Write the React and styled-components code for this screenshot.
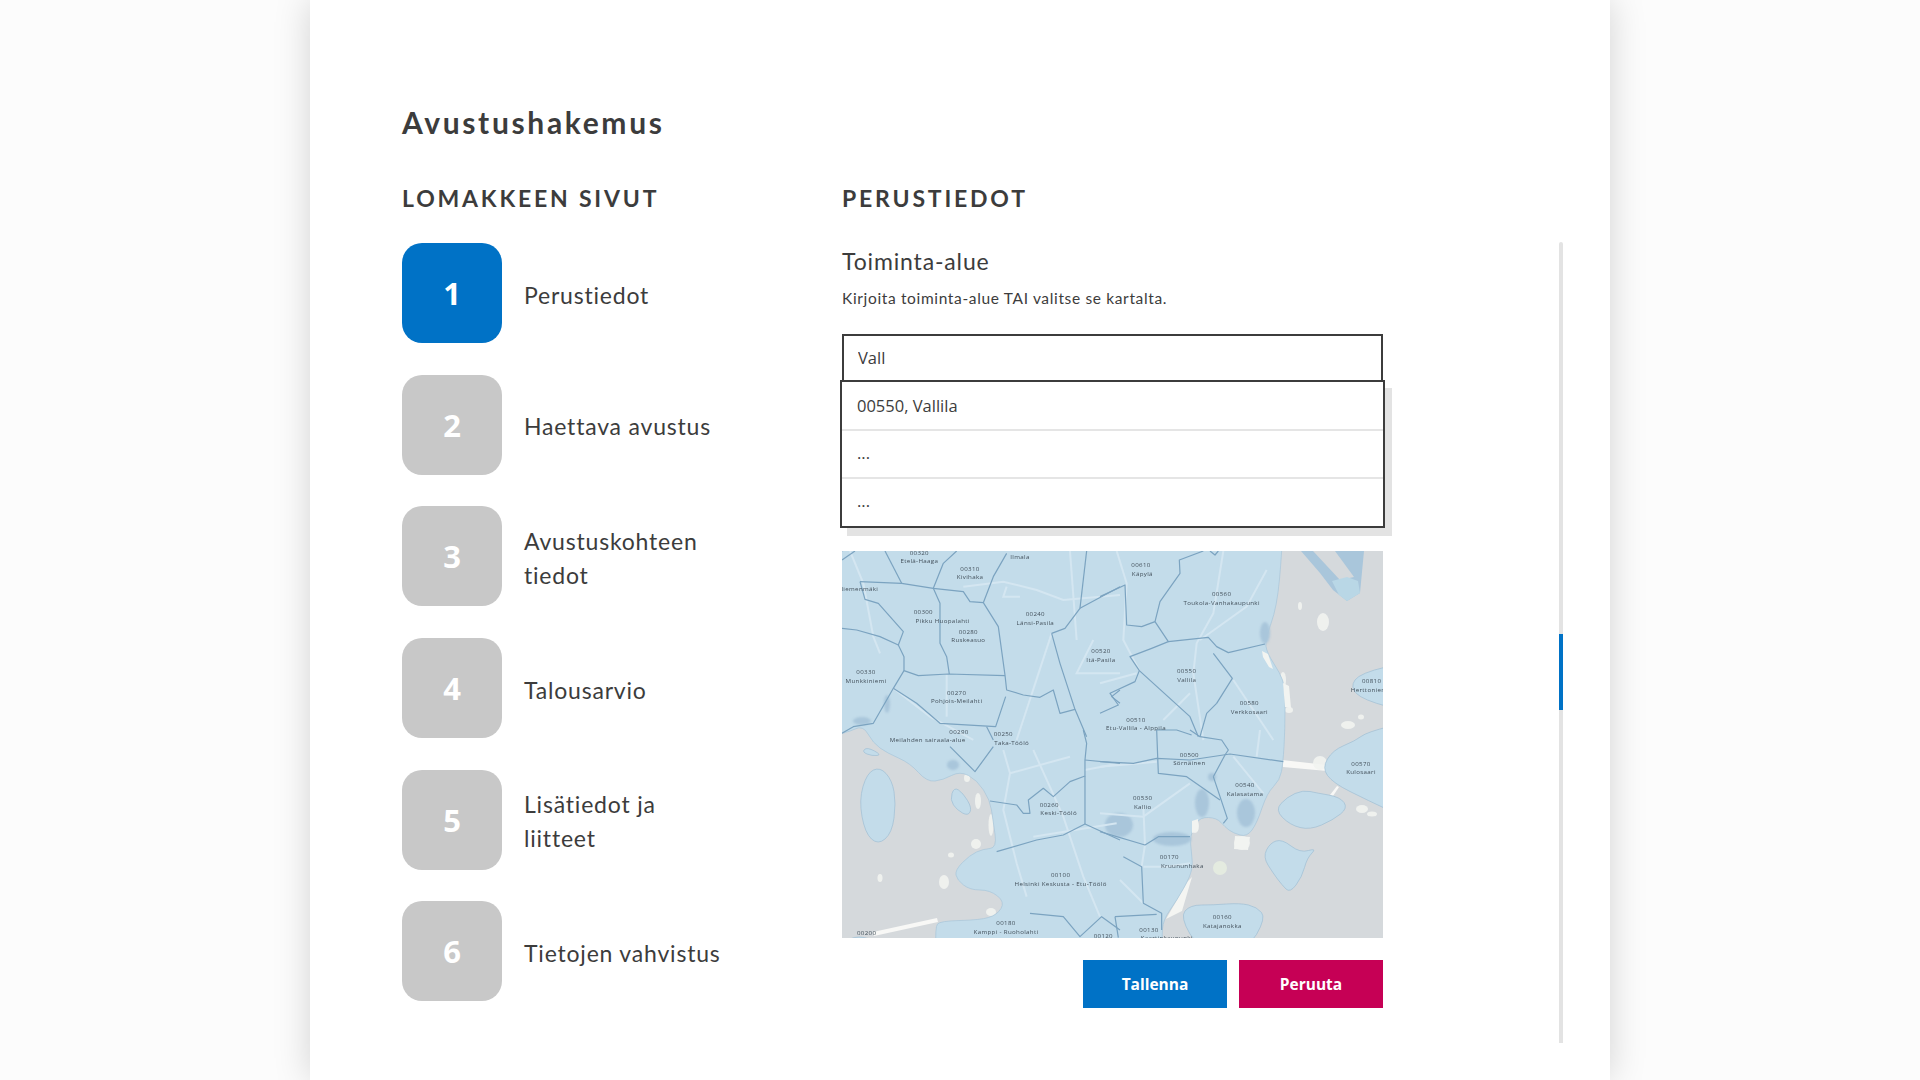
import React from "react";
import styled, { createGlobalStyle } from "styled-components";

const Global = createGlobalStyle`
  html, body { margin: 0; padding: 0; background: #fcfcfc; overflow: hidden; }
  * { box-sizing: border-box; }
`;
const Panel = styled.main`
  width: 1300px; height: 1080px; margin: 0 auto; padding: 106px 0 0 92px;
  background: #fff; box-shadow: 0 0 34px rgba(0,0,0,.17);
  color: #3c3c3c; font-family: Lato, "Noto Sans", sans-serif;
`;
const Title = styled.h1`
  margin: 0 0 46px; font-size: 30px; line-height: 32px; font-weight: 700; letter-spacing: 2.65px;
`;
const Columns = styled.div`display: flex; align-items: flex-start;`;
const Sidebar = styled.nav`width: 440px; flex: none;`;
const SectionHeading = styled.h2`
  margin: 0 0 ${p => (p.$flush ? 0 : 31)}px; font-size: 23px; line-height: 28px; font-weight: 700; letter-spacing: 2.8px; text-transform: uppercase;
`;
const Steps = styled.ol`
  list-style: none; margin: 0; padding: 0; display: flex; flex-direction: column; gap: 31.7px;
`;
const Step = styled.li`display: flex; align-items: center; gap: 22px;`;
const Tile = styled.span`
  width: 100px; height: 100px; border-radius: 20px; flex: none;
  display: flex; align-items: center; justify-content: center;
  background: ${p => (p.$active ? "#0072c6" : "#c8c8c8")}; color: #fff;
  font: 700 31px "Open Sans", sans-serif;
`;
const StepLabel = styled.span`
  width: 205px; padding-top: 3px; font-size: 23px; line-height: 34px; letter-spacing: .8px;
`;
const Main = styled.section`width: 541px; flex: none;`;
const FieldTitle = styled.h3`
  margin: 35px 0 0; font-size: 23px; line-height: 28px; font-weight: 400; letter-spacing: .85px;
`;
const Hint = styled.p`
  margin: 13px 0 26px; font-size: 15.5px; line-height: 20px; letter-spacing: .65px;
`;
const Combo = styled.div`position: relative;`;
const Input = styled.input`
  display: block; width: 100%; height: 48px; padding: 0 14px 2px; border: 2px solid #3c3c3c; border-radius: 0;
  background: #fff; color: #3c3c3c; font: 400 16.5px "Open Sans", sans-serif; outline: none;
`;
const Menu = styled.ul`
  position: absolute; top: 46px; left: -2px; right: -2px; margin: 0; padding: 0; list-style: none;
  height: 148px; background: #fff; border: 2px solid #3c3c3c; box-shadow: 7px 8px 0 #e3e3e3;
`;
const MenuItem = styled.li`
  height: 47px; padding: 0 15px 1px; display: flex; align-items: center;
  font: 400 16.5px "Open Sans", sans-serif; color: #3c3c3c;
  & + & { height: 48px; padding-bottom: 3px; border-top: 2px solid #e5e5e5; }
`;
const MapBox = styled.div`
  margin-top: 169px; width: 541px; height: 387px; overflow: hidden; background: #d5d9dc;
  svg { display: block; filter: blur(.45px); }
`;
const Actions = styled.div`display: flex; justify-content: flex-end; gap: 12px; margin-top: 22px;`;
const Button = styled.button`
  width: 144px; height: 48px; border: 0; border-radius: 0; color: #fff;
  background: ${p => (p.$danger ? "#c60055" : "#0072c6")};
  font: 700 15.5px "Open Sans", sans-serif;
`;
const Track = styled.div`
  width: 4px; height: 801px; flex: none; margin: 58px 0 0 176px; background: #e3e3e3; border-radius: 2px 2px 0 0;
`;
const Thumb = styled.div`width: 4px; height: 76px; margin-top: 392px; background: #0072c6;`;

const LAND = "#c3dcea", DARK = "#a9c6db", LINE = "#7ba3c0", ROAD = "#d4e6f1", SAND = "#f2f4f1", WATER = "#d5d9dc";

// Closed outline through the midpoints of a polygon's edges, so coasts come out round.
const smooth = pts => {
  const mid = (a, b) => [(a[0] + b[0]) / 2, (a[1] + b[1]) / 2];
  const start = mid(pts[pts.length - 1], pts[0]);
  let d = `M${start[0]} ${start[1]}`;
  pts.forEach((p, i) => {
    const m = mid(p, pts[(i + 1) % pts.length]);
    d += `Q${p[0]} ${p[1]} ${m[0]} ${m[1]}`;
  });
  return d + "Z";
};

const land = [[-40,-40],[441,-40],[440,0],[435,56],[423,89],[425,102],[438,122],[443,136],[443,179],[441,212],[438,229],[425,242],[415,272],[405,286],[391,282],[383,276],[375,267],[358,266],[350,279],[348,292],[351,312],[348,326],[335,349],[321,369],[320,387],[320,420],[95,420],[93,376],[98,370],[138,369],[155,364],[163,351],[148,339],[128,339],[115,329],[113,319],[128,304],[141,298],[155,297],[151,269],[148,249],[135,229],[118,220],[101,229],[85,231],[68,212],[45,202],[31,192],[21,174],[5,182],[-40,190]];
const islands = [
  [[570,110],[518,122],[508,136],[521,149],[570,162]],
  [[570,170],[525,181],[513,190],[491,199],[480,217],[491,232],[525,249],[570,270]],
  [[433,259],[445,246],[461,239],[475,242],[498,246],[506,257],[491,269],[468,279],[448,274]],
  [[421,306],[428,292],[440,288],[458,302],[475,297],[465,307],[460,326],[448,342],[440,334],[431,322]],
  [[338,366],[348,354],[371,354],[398,352],[415,356],[424,367],[405,400],[358,400]],
  [[17,249],[25,222],[38,216],[50,229],[54,252],[50,282],[36,294],[23,282]],
  [[20,201],[25,196],[40,204],[30,205]],
  [[108,249],[112,236],[121,242],[130,257],[126,265],[115,259]],
  [[0,392],[16,384],[40,392]],
];
const sandBlobs = [
  [481,71,6,9],[458,55,2,4],[506,174,7,4],[519,166,3,2.5],[441,129,3,8],[447,159,4,3],
  [478,212,7,7],[400,292,8,7],[353,275,4,7],[125,227,3,4],[136,250,3,8],[149,274,2.5,11],
  [134,293,5,5],[109,304,3,2.5],[38,327,2.5,4],[102,331,5,7],[149,361,5,4],[520,258,6,4],[530,263,5,2.5],
];
const darkBlobs = [
  [277,274,14,12],[360,252,7,14],[330,288,19,7],[423,82,5,11],[404,262,9,14],[20,170,9,4],[45,153,3,9],[111,214,6,5],[370,226,4,4],
];
const lines3 = [
  "M90 125L215 130L310 145L400 155L420 185L460 188L505 260L525 405L530 450L580 465L630 472L670 450L690 520L735 508",
  "M90 125L105 178L145 190L220 275L205 315L222 350L222 392L265 407L355 402L525 407",
  "M310 145L330 190L330 310L350 350L358 402",
  "M222 392L190 445L170 480L130 550L70 560L36 580",
  "M190 445L260 490L330 550L497 560L527 470",
  "M460 188L490 110L530 40", "M310 145L340 70L380 33", "M165 33L215 130",
  "M36 265L80 270L150 290L205 315", "M665 280L705 265L750 205L870 140", "M665 280L690 370L735 508L770 590",
  "M750 205L770 33", "M36 60L75 33", "M870 450L845 470L870 490", "M470 560L490 600",
];
const lines4 = [
  "M0 170L75 135L80 255L125 260L165 245L180 185L240 100L238 60L310 33",
  "M165 245L205 305L325 292L350 320L385 338L495 312",
  "M205 305L155 325L90 350L118 392L270 530L295 590",
  "M340 340L397 415L350 490L320 520L300 590",
  "M118 392L105 425L30 460L55 495L0 520",
  "M330 33L345 45L355 33", "M170 570L230 570L275 585",
];
const lines5 = [
  "M360 50L435 125L490 50",
  "M480 213L560 225L580 250L600 250L595 210L640 175L670 200L720 155L765 138L765 90L770 40L760 0",
  "M765 90L870 100", "M765 282L765 138",
  "M500 365L620 330L700 315L765 282L870 330",
  "M600 550L700 560L750 620L815 560L870 600",
];
const lines6 = [
  "M0 95L100 100L170 85L270 90L390 72L550 95",
  "M170 0L175 130L260 140L360 210",
  "M340 140L375 75L385 60L365 30L300 20L270 0",
  "M340 140L382 265L370 280",
  "M0 305L135 345L175 320L270 320",
  "M70 380L125 410L130 520L185 550L185 600",
  "M45 560L170 553", "M45 560L55 623",
];
const roads3 = ["M400 140L520 125L620 150L700 180L870 165", "M60 33L100 130L130 290L150 340", "M190 445L300 530L430 600", "M350 402L350 530", "M530 140L520 170L570 170", "M665 280L560 600", "M790 300L740 400L870 400", "M720 33L740 300"];
const roads4 = ["M50 33L80 130L70 300L118 392", "M370 33L340 220L290 310L280 400L310 600", "M500 90L440 200L300 300", "M0 430L110 400", "M400 420L520 600", "M270 460L190 540"];
const roads5 = ["M520 60L540 130L520 240L560 400L590 500", "M610 60L700 260L760 440L810 560", "M765 120L870 100", "M540 130L720 80", "M610 320L860 280"];
const roads6 = ["M130 230L135 345L125 410", "M0 110L170 95", "M270 160L130 260", "M400 80L490 190", "M480 0L470 80", "M0 250L130 260", "M130 410L200 410L270 400", "M60 450L130 520"];

const labels3 = [[268,45,"00320"],[268,70,"Etelä-Haaga"],[420,92,"00310"],[420,118,"Kivihaka"],[570,58,"Ilmala"],[85,154,"Niemenmäki"],[280,222,"00300"],[338,248,"Pikku Huopalahti"],[415,281,"00280"],[415,307,"Ruskeasuo"],[616,229,"00240"],[616,254,"Länsi-Pasila"],[813,340,"00520"],[813,367,"Itä-Pasila"],[108,402,"00330"],[108,428,"Munkkiniemi"],[380,465,"00270"],[380,490,"Pohjois-Meilahti"],[387,581,"00290"],[520,588,"00250"]];
const labels4 = [[123,82,"00610"],[127,109,"Käpylä"],[365,168,"00560"],[365,195,"Toukola-Vanhakaupunki"],[260,400,"00550"],[260,427,"Vallila"],[448,496,"00580"],[448,522,"Verkkosaari"],[108,545,"00510"],[108,571,"Etu-Vallila - Alppila"],[815,428,"00810"],[810,455,"Herttoniemi"]];
const labels5 = [[293,37,"Meilahden sairaala-alue"],[545,45,"Taka-Töölö"],[658,230,"00260"],[686,256,"Keski-Töölö"],[692,440,"00100"],[692,467,"Helsinki Keskusta - Etu-Töölö"],[528,586,"00180"],[528,612,"Kamppi - Ruoholahti"],[110,616,"00200"]];
const labels6 = [[268,80,"00500"],[268,106,"Sörnäinen"],[783,107,"00570"],[783,133,"Kulosaari"],[128,210,"00530"],[128,236,"Kallio"],[435,172,"00540"],[435,198,"Kalasatama"],[208,388,"00170"],[247,414,"Kruununhaka"],[367,567,"00160"],[367,593,"Katajanokka"],[147,606,"00130"],[200,630,"Kaartinkaupunki"],[10,625,"00120"]];

const Layer = ({ dx, dy, roads, lines }) => (
  <g transform={`translate(${dx} ${dy}) scale(.3333)`}>
    {roads.map((d, i) => <path key={i} d={d} fill="none" stroke={ROAD} strokeWidth="6" />)}
    {lines.map((d, i) => <path key={i} d={d} fill="none" stroke={LINE} strokeWidth="3.6" strokeLinejoin="round" />)}
  </g>
);
const Labels = ({ dx, dy, labels }) => (
  <g transform={`translate(${dx} ${dy}) scale(.3333)`}>
    {labels.map(([x, y, t]) => (
      <text key={t} x={x} y={y} textAnchor="middle" fontFamily="Open Sans" fontSize="18.5" fontWeight="500" letterSpacing="1" fill="#43505b">{t}</text>
    ))}
  </g>
);

const HelsinkiMap = () => (
  <svg width="541" height="387" viewBox="0 0 541 387" role="img" aria-label="Kartta">
    <rect width="541" height="387" fill={WATER} />
    <path d="M440 209L485 214L485 220L441 216Z" fill="#f8f8f6" />
    <path d="M31 381L95 367L96 371L32 385Z" fill="#f8f8f6" />
    <path d="M488 244L495 235L497 236L491 245Z" fill="#f8f8f6" />
    <ellipse cx="378" cy="317" rx="7" ry="7" fill="#e4ebe0" />
    <path d="M335 349L345 331L350 326L340 360L324 368Z" fill="#f4f5f2" />
    <g opacity=".9">{sandBlobs.map(([cx, cy, rx, ry], i) => <ellipse key={i} cx={cx} cy={cy} rx={rx} ry={ry} fill={SAND} />)}</g>
    <path d={smooth(land)} fill={LAND} stroke="#a7c5da" strokeWidth=".7" />
    <path d="M459 0L478 22L491 39L505 50L518 42L522 0Z" fill={DARK} />
    <path d="M471 0L498 29L512 26L493 0Z" fill={WATER} />
    <path d="M490 30L505 26L516 30L518 42L505 50L497 44Z" fill="#b9d7e6" />
    {islands.map((pts, i) => <path key={i} d={smooth(pts)} fill={LAND} stroke="#9fbed4" strokeWidth=".7" />)}
    <path d="M420 100l6 3 5 15-4-2-6-10zM441 132l2 24 6 1-2-22zM350 270l6-2 0 12-6 2zM393 285l15 1-2 13-14-1z" fill={SAND} />
    <g style={{ filter: "blur(1.2px)" }}>
      {darkBlobs.map(([cx, cy, rx, ry], i) => <ellipse key={i} cx={cx} cy={cy} rx={rx} ry={ry} fill={DARK} />)}
    </g>
    <Layer dx={-12} dy={-11} roads={roads3} lines={lines3} />
    <Layer dx={258} dy={-11} roads={roads4} lines={lines4} />
    <Layer dx={-12} dy={179} roads={roads5} lines={lines5} />
    <Layer dx={258} dy={179} roads={roads6} lines={lines6} />
    <Labels dx={-12} dy={-11} labels={labels3} />
    <Labels dx={258} dy={-11} labels={labels4} />
    <Labels dx={-12} dy={179} labels={labels5} />
    <Labels dx={258} dy={179} labels={labels6} />
  </svg>
);

const steps = ["Perustiedot", "Haettava avustus", "Avustuskohteen tiedot", "Talousarvio", "Lisätiedot ja liitteet", "Tietojen vahvistus"];

export default function App() {
  return (
    <>
      <Global />
      <Panel>
        <Title>Avustushakemus</Title>
        <Columns>
          <Sidebar>
            <SectionHeading>Lomakkeen sivut</SectionHeading>
            <Steps>
              {steps.map((s, i) => (
                <Step key={s}>
                  <Tile $active={i === 0}>{i + 1}</Tile>
                  <StepLabel>{s}</StepLabel>
                </Step>
              ))}
            </Steps>
          </Sidebar>
          <Main>
            <SectionHeading $flush>Perustiedot</SectionHeading>
            <FieldTitle>Toiminta-alue</FieldTitle>
            <Hint>Kirjoita toiminta-alue TAI valitse se kartalta.</Hint>
            <Combo>
              <Input readOnly value="Vall" />
              <Menu>
                <MenuItem>00550, Vallila</MenuItem>
                <MenuItem>...</MenuItem>
                <MenuItem>...</MenuItem>
              </Menu>
            </Combo>
            <MapBox><HelsinkiMap /></MapBox>
            <Actions>
              <Button>Tallenna</Button>
              <Button $danger>Peruuta</Button>
            </Actions>
          </Main>
          <Track><Thumb /></Track>
        </Columns>
      </Panel>
    </>
  );
}
